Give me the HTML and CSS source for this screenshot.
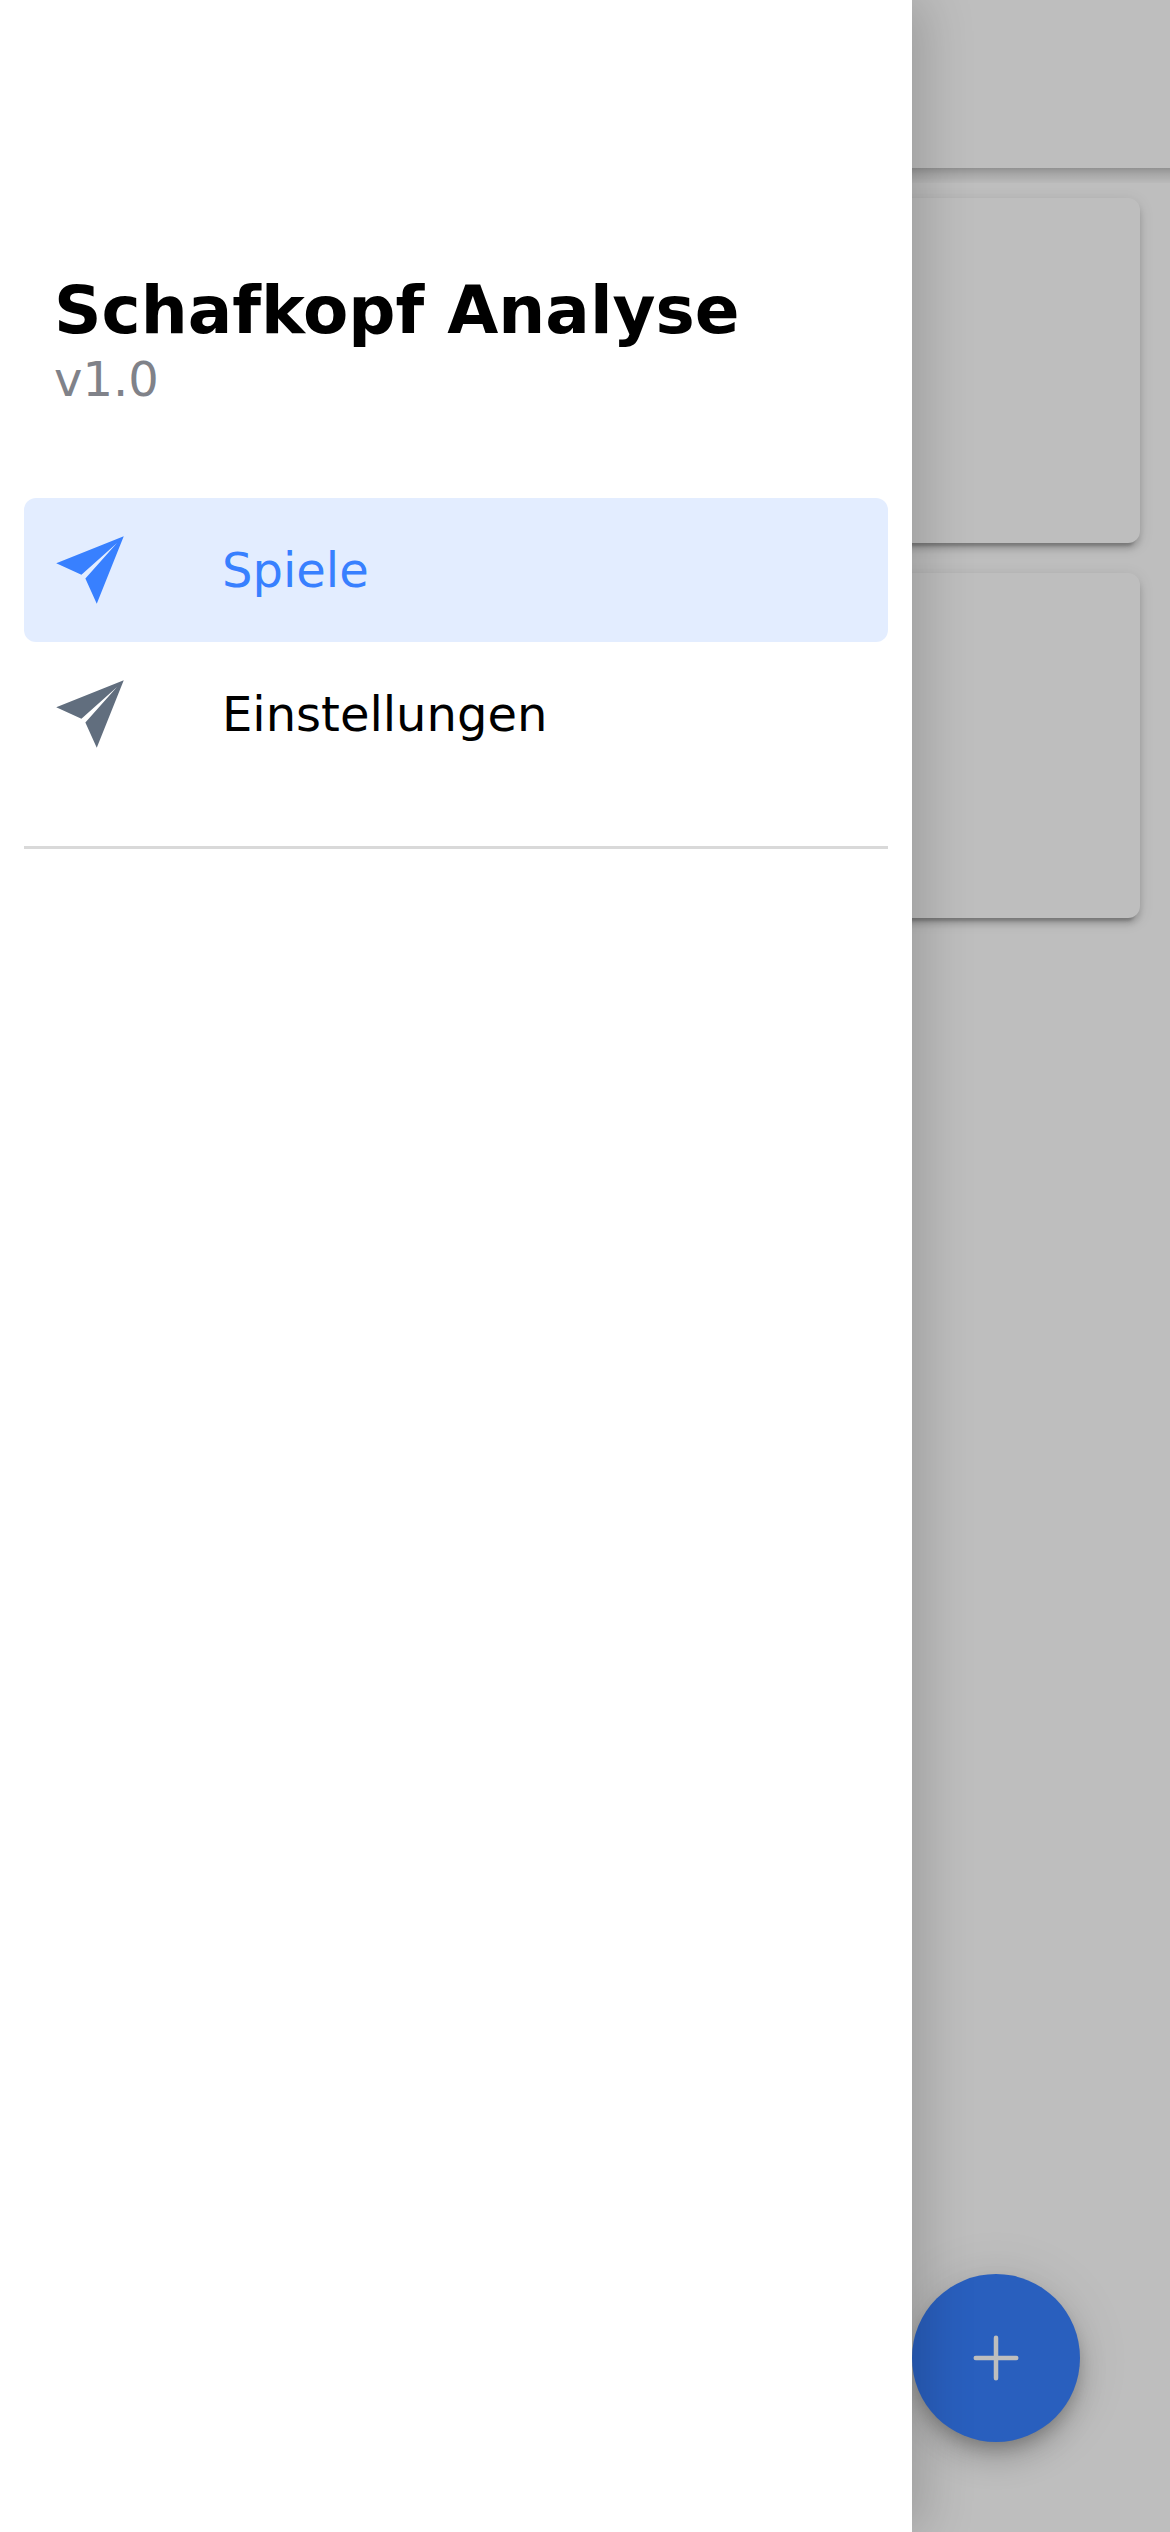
FILE: index.html
```html
<!DOCTYPE html>
<html lang="de">
<head>
<meta charset="utf-8">
<title>Schafkopf Analyse</title>
<link rel="stylesheet" href="styles.css">
</head>
<body>
<div class="app">
  <main class="page">
    <header class="toolbar"></header>
    <section class="games">
      <article class="card"></article>
      <article class="card"></article>
    </section>
    <button class="fab" aria-label="Neues Spiel">
      <svg class="fab-icon" viewBox="0 0 512 512"><path d="M256 112v288M400 256H112"/></svg>
    </button>
  </main>
  <div class="backdrop"></div>
  <aside class="menu">
    <header class="menu-header">
      <h1 class="menu-title">Schafkopf Analyse</h1>
      <p class="menu-note">v1.0</p>
    </header>
    <nav class="menu-list">
      <a class="menu-item menu-item-selected">
        <svg class="menu-icon" viewBox="0 0 512 512"><path d="M496 16L15.88 208 195 289 448 64 223 317l81 179 192-480z"/></svg>
        <span>Spiele</span>
      </a>
      <a class="menu-item">
        <svg class="menu-icon" viewBox="0 0 512 512"><path d="M496 16L15.88 208 195 289 448 64 223 317l81 179 192-480z"/></svg>
        <span>Einstellungen</span>
      </a>
    </nav>
  </aside>
</div>
</body>
</html>
```
FILE: styles.css
```css
* {
  box-sizing: border-box;
}

body {
  margin: 0;
  font-family: "DejaVu Sans", sans-serif;
  font-size: 48px;
  color: #000;
}

.app {
  position: relative;
  width: 1170px;
  height: 2532px;
  overflow: hidden;
  background: #fff;
}

.page {
  height: 100%;
}

.toolbar {
  position: relative;
  height: 168px;
}

.toolbar::after {
  content: "";
  position: absolute;
  top: 100%;
  left: 0;
  right: 0;
  height: 15px;
  background: linear-gradient(rgba(0, 0, 0, 0.23), rgba(0, 0, 0, 0.12) 40%, rgba(0, 0, 0, 0.02));
}

.games {
  display: flex;
  flex-direction: column;
  gap: 30px;
  padding: 30px;
}

.card {
  height: 345px;
  border-radius: 12px;
  background: #fff;
  box-shadow:
    0 9px 3px -6px rgba(0, 0, 0, 0.2),
    0 6px 6px 0 rgba(0, 0, 0, 0.14),
    0 3px 15px 0 rgba(0, 0, 0, 0.12);
}

.fab {
  position: absolute;
  right: 90px;
  bottom: 90px;
  display: grid;
  place-items: center;
  width: 168px;
  height: 168px;
  padding: 0;
  border: 0;
  border-radius: 50%;
  background: #3880ff;
  box-shadow:
    0 9px 15px -3px rgba(0, 0, 0, 0.2),
    0 18px 30px 0 rgba(0, 0, 0, 0.14),
    0 3px 54px 0 rgba(0, 0, 0, 0.12);
}

.fab-icon {
  width: 72px;
  height: 72px;
  fill: none;
  stroke: #fff;
  stroke-width: 32px;
  stroke-linecap: round;
}

.backdrop {
  position: absolute;
  inset: 0;
  background: rgba(0, 0, 0, 0.256);
}

.menu {
  position: absolute;
  top: 0;
  bottom: 0;
  left: 0;
  width: 912px;
  padding: 272px 24px 0;
  background: #fff;
  box-shadow: 12px 0 48px rgba(0, 0, 0, 0.18);
}

.menu-header {
  height: 226px;
  padding-left: 30px;
}

.menu-title {
  margin: 0 0 1px;
  font-size: 66px;
  font-weight: 700;
  line-height: 78px;
}

.menu-note {
  margin: 0;
  line-height: 56px;
  color: #808289;
}

.menu-list {
  height: 351px;
  border-bottom: 3px solid #d9d9d9;
}

.menu-item {
  display: flex;
  align-items: center;
  gap: 96px;
  height: 144px;
  padding: 0 30px;
  border-radius: 12px;
}

.menu-icon {
  width: 72px;
  height: 72px;
  fill: #616e7e;
}

.menu-item-selected {
  background: rgba(56, 128, 255, 0.14);
  color: #3880ff;
}

.menu-item-selected .menu-icon {
  fill: #3880ff;
}
```
